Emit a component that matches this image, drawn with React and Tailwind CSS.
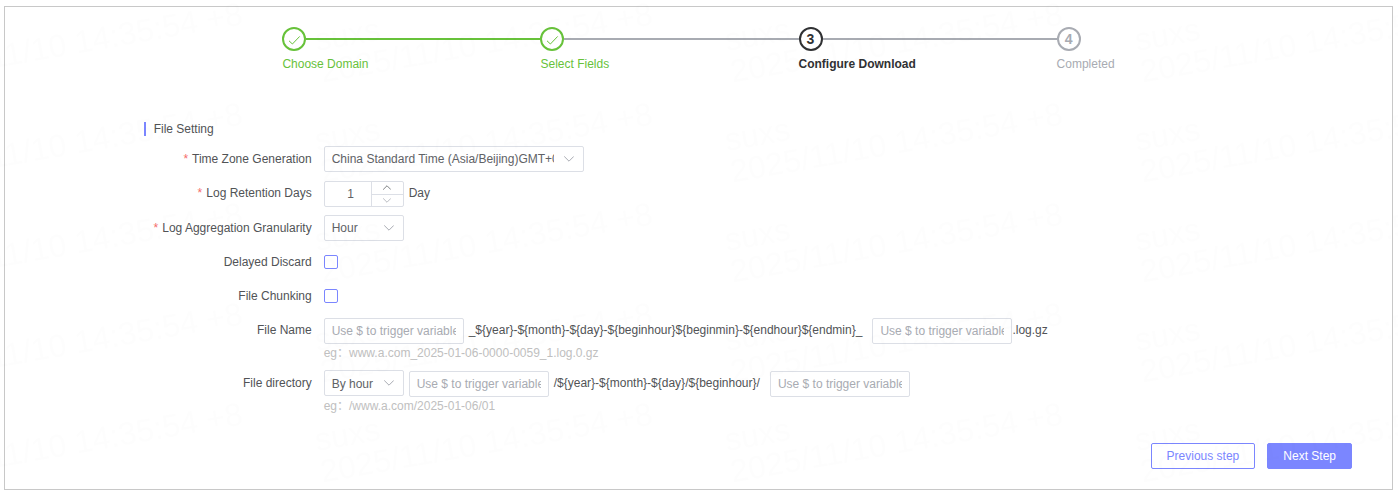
import React, { useState } from "react";

const steps = [
  { title: "Choose Domain", status: "finish" },
  { title: "Select Fields", status: "finish" },
  { title: "Configure Download", status: "process" },
  { title: "Completed", status: "wait" },
];

const stepStyles = {
  finish: {
    circle: "border-[#67c23a] text-[#67c23a]",
    line: "bg-[#67c23a]",
    title: "text-[#67c23a]",
  },
  process: {
    circle: "border-[#303133] text-[#303133]",
    line: "bg-[#a8abb2]",
    title: "text-[#303133] font-bold",
  },
  wait: {
    circle: "border-[#a8abb2] text-[#a8abb2]",
    line: "bg-[#a8abb2]",
    title: "text-[#a8abb2]",
  },
};

function Chevron({ up, className }) {
  return (
    <svg
      viewBox="0 0 10 6"
      fill="none"
      stroke="currentColor"
      strokeLinecap="round"
      strokeLinejoin="round"
      className={className}
      aria-hidden="true"
    >
      <path d={up ? "M0.5 5.3 5 0.8l4.5 4.5" : "M0.5 0.7 5 5.2l4.5-4.5"} />
    </svg>
  );
}

function Step({ step, index, last, lineStatus }) {
  const style = stepStyles[step.status];
  return (
    <li className={last ? "flex-none" : "min-w-0 flex-1"}>
      <div className="flex items-center">
        <span
          className={`flex h-6 w-6 shrink-0 items-center justify-center rounded-full border-2 text-sm font-bold ${style.circle}`}
        >
          {step.status === "finish" ? (
            <svg viewBox="0 0 14 14" fill="none" stroke="currentColor" className="h-3.5 w-3.5">
              <path d="M2 8.8 5.4 12 12.7 4.4" />
            </svg>
          ) : (
            index + 1
          )}
        </span>
        {!last && <span className={`h-0.5 flex-1 ${stepStyles[lineStatus].line}`} />}
      </div>
      <div className={`whitespace-nowrap leading-[26px] ${style.title}`}>{step.title}</div>
    </li>
  );
}

function FormRow({ label, htmlFor, required, children }) {
  return (
    <div className="mb-2 flex items-start">
      <label
        htmlFor={htmlFor}
        className="w-[180px] shrink-0 pr-3 text-right leading-[26px] text-[#515356]"
      >
        {required && <span className="mr-1 text-[#f56c6c]">*</span>}
        {label}
      </label>
      <div className="min-w-0 flex-1">{children}</div>
    </div>
  );
}

function Select({ id, className, options, label }) {
  return (
    <div className={`relative ${className}`}>
      <select
        id={id}
        aria-label={label}
        className="block h-[26px] w-full appearance-none overflow-hidden rounded-[2px] border border-[#dcdfe6] bg-white pl-[7px] pr-[29px] text-[#606266] outline-none"
      >
        {options.map((option) => (
          <option key={option}>{option}</option>
        ))}
      </select>
      <Chevron className="pointer-events-none absolute right-2.5 top-2.5 h-1.5 w-2.5 text-[#a8abb2]" />
    </div>
  );
}

function VariableInput({ id, label }) {
  return (
    <input
      id={id}
      type="text"
      aria-label={label}
      placeholder="Use $ to trigger variable"
      className="mt-px h-[26px] w-[140px] shrink-0 rounded-[2px] border border-[#dcdfe6] bg-white px-[7px] text-[#606266] outline-none placeholder:text-[#a8abb2]"
    />
  );
}

function DaysInput({ id }) {
  const [days, setDays] = useState(1);
  return (
    <div className="mt-px flex h-[26px] w-20 rounded-[2px] border border-[#dcdfe6] bg-white">
      <input
        id={id}
        type="text"
        inputMode="numeric"
        value={days}
        onChange={(e) => setDays(Number(e.target.value) || 1)}
        className="w-full min-w-0 flex-1 pl-1.5 text-center text-[#606266] outline-none"
      />
      <div className="flex w-8 shrink-0 flex-col border-l border-[#dcdfe6]">
        <button
          type="button"
          aria-label="Increase days"
          onClick={() => setDays(days + 1)}
          className="flex flex-1 items-center justify-center border-b border-[#dcdfe6] text-[#606266]"
        >
          <Chevron up className="h-[5px] w-2" />
        </button>
        <button
          type="button"
          aria-label="Decrease days"
          onClick={() => setDays(Math.max(1, days - 1))}
          className="flex flex-1 items-center justify-center text-[#a8abb2]"
        >
          <Chevron className="h-[5px] w-2" />
        </button>
      </div>
    </div>
  );
}

function Checkbox({ id }) {
  return (
    <div className="flex h-[26px] items-center">
      <input
        id={id}
        type="checkbox"
        className="h-3.5 w-3.5 appearance-none rounded-[2px] border border-[#7b86ff] bg-white checked:bg-[#7b86ff]"
      />
    </div>
  );
}

function Watermark() {
  return (
    <svg className="pointer-events-none absolute inset-0 h-full w-full" aria-hidden="true">
      <defs>
        <pattern id="watermark" x="310" y="0" width="410" height="100" patternUnits="userSpaceOnUse">
          {/* repeated above and below so the slanted text carries on over the tile's edge */}
          {[-100, 0, 100].map((y) => (
            <g key={y} transform={`translate(7 ${y + 51}) rotate(-10)`} fontSize="32" fill="#000000">
              <text x="0" y="0">suxs</text>
              <text x="0" y="32">2025/11/10 14:35:54 +8</text>
            </g>
          ))}
        </pattern>
      </defs>
      <rect width="100%" height="100%" fill="url(#watermark)" opacity="0.008" />
    </svg>
  );
}

export default function App() {
  return (
    <div className="relative bg-white pb-[5px] pl-1 pr-[5px] pt-1.5 font-['Liberation_Sans','Noto_Sans_CJK_SC',sans-serif] text-xs text-[#515356]">
      <main className="border border-[#c8c8c8] pb-5 pt-5">
        <ol className="mx-auto flex w-[60%]">
          {steps.map((step, index) => (
            <Step
              key={step.title}
              step={step}
              index={index}
              last={index === steps.length - 1}
              lineStatus={steps[index + 1]?.status === "finish" ? "finish" : "wait"}
            />
          ))}
        </ol>

        <form onSubmit={(e) => e.preventDefault()}>
          <div className="mx-[10%] mt-11">
            <h2 className="mb-[9px] flex h-4 items-center gap-2">
              <span className="h-3.5 w-0.5 bg-[#7b86ff]" />
              File Setting
            </h2>

            <FormRow label="Time Zone Generation" htmlFor="timezone" required>
              <Select
                id="timezone"
                className="w-[260px]"
                options={["China Standard Time (Asia/Beijing)GMT+08:00"]}
              />
            </FormRow>

            <FormRow label="Log Retention Days" htmlFor="days" required>
              <div className="flex items-start gap-[5px]">
                <DaysInput id="days" />
                <span className="leading-[26px]">Day</span>
              </div>
            </FormRow>

            <FormRow label="Log Aggregation Granularity" htmlFor="granularity" required>
              <Select id="granularity" className="w-20" options={["Hour", "Day"]} />
            </FormRow>

            <FormRow label="Delayed Discard" htmlFor="discard">
              <Checkbox id="discard" />
            </FormRow>

            <FormRow label="File Chunking" htmlFor="chunking">
              <Checkbox id="chunking" />
            </FormRow>

            <FormRow label="File Name" htmlFor="prefix">
              <div className="flex items-start gap-[5px] whitespace-nowrap leading-[26px]">
                <VariableInput id="prefix" />
                <span className="pr-[5px]">
                  {"_${year}-${month}-${day}-${beginhour}${beginmin}-${endhour}${endmin}_"}
                </span>
                <div className="flex items-start">
                  <VariableInput id="suffix" label="File name suffix" />
                  <span>.log.gz</span>
                </div>
              </div>
              <p className="leading-[18px] text-[#c0c0c0]">eg：www.a.com_2025-01-06-0000-0059_1.log.0.gz</p>
            </FormRow>

            <FormRow label="File directory" htmlFor="directory">
              <div className="flex items-start gap-[5px] whitespace-nowrap leading-[26px]">
                <Select id="directory" className="w-20 shrink-0" options={["By hour", "By day"]} />
                <VariableInput id="dir-prefix" label="Directory prefix" />
                <span className="pr-[5px]">{"/${year}-${month}-${day}/${beginhour}/"}</span>
                <VariableInput id="dir-suffix" label="Directory suffix" />
              </div>
              <p className="leading-[18px] text-[#c0c0c0]">eg：/www.a.com/2025-01-06/01</p>
            </FormRow>
          </div>

          <div className="mt-7 flex justify-end gap-3 pr-10">
            <button
              type="button"
              className="h-[26px] rounded-[2px] border border-[#7b86ff] bg-white px-[15px] text-[#7b86ff]"
            >
              Previous step
            </button>
            <button
              type="submit"
              className="h-[26px] rounded-[2px] border border-[#7b86ff] bg-[#7b86ff] px-[15px] text-white"
            >
              Next Step
            </button>
          </div>
        </form>
      </main>
      <Watermark />
    </div>
  );
}
